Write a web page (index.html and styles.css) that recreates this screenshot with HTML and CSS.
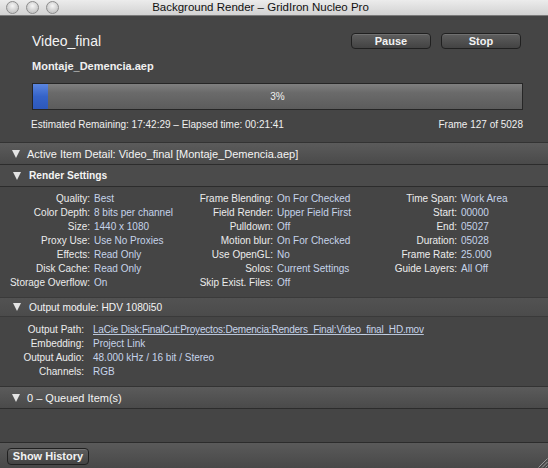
FILE: index.html
```html
<!DOCTYPE html>
<html>
<head>
<meta charset="utf-8">
<link rel="stylesheet" href="styles.css">
</head>
<body>
<div class="window">
  <div class="titlebar">
    <div class="lights"><span class="light"></span><span class="light"></span><span class="light"></span></div>
    <div class="title">Background Render – GridIron Nucleo Pro</div>
  </div>
  <div class="summary">
    <div class="row-top">
      <div class="name">Video_final</div>
      <div class="buttons"><button class="btn">Pause</button><button class="btn">Stop</button></div>
    </div>
    <div class="project">Montaje_Demencia.aep</div>
    <div class="progress"><div class="fill" style="width:3%"></div><span class="pct">3%</span></div>
    <div class="status"><span>Estimated Remaining: 17:42:29 – Elapsed time: 00:21:41</span><span>Frame 127 of 5028</span></div>
  </div>

  <div class="head head-main"><span class="tri"></span><span class="head-text">Active Item Detail: Video_final [Montaje_Demencia.aep]</span></div>
  <div class="head head-sub"><span class="tri"></span><span class="head-text sub-text">Render Settings</span></div>
  <div class="settings">
    <span class="lbl">Quality:</span><span class="val">Best</span>
    <span class="lbl">Frame Blending:</span><span class="val">On For Checked</span>
    <span class="lbl">Time Span:</span><span class="val">Work Area</span>

    <span class="lbl">Color Depth:</span><span class="val">8 bits per channel</span>
    <span class="lbl">Field Render:</span><span class="val">Upper Field First</span>
    <span class="lbl">Start:</span><span class="val">00000</span>

    <span class="lbl">Size:</span><span class="val">1440 x 1080</span>
    <span class="lbl">Pulldown:</span><span class="val">Off</span>
    <span class="lbl">End:</span><span class="val">05027</span>

    <span class="lbl">Proxy Use:</span><span class="val">Use No Proxies</span>
    <span class="lbl">Motion blur:</span><span class="val">On For Checked</span>
    <span class="lbl">Duration:</span><span class="val">05028</span>

    <span class="lbl">Effects:</span><span class="val">Read Only</span>
    <span class="lbl">Use OpenGL:</span><span class="val">No</span>
    <span class="lbl">Frame Rate:</span><span class="val">25.000</span>

    <span class="lbl">Disk Cache:</span><span class="val">Read Only</span>
    <span class="lbl">Solos:</span><span class="val">Current Settings</span>
    <span class="lbl">Guide Layers:</span><span class="val">All Off</span>

    <span class="lbl">Storage Overflow:</span><span class="val">On</span>
    <span class="lbl">Skip Exist. Files:</span><span class="val">Off</span>
    <span class="lbl"></span><span class="val"></span>
  </div>
  <div class="head head-out"><span class="tri"></span><span class="head-text sub-text">Output module: HDV 1080i50</span></div>
  <div class="output">
    <span class="lbl">Output Path:</span><span class="val link">LaCie Disk:FinalCut:Proyectos:Demencia:Renders_Final:Video_final_HD.mov</span>
    <span class="lbl">Embedding:</span><span class="val">Project Link</span>
    <span class="lbl">Output Audio:</span><span class="val">48.000 kHz / 16 bit / Stereo</span>
    <span class="lbl">Channels:</span><span class="val">RGB</span>
  </div>
  <div class="head head-main"><span class="tri"></span><span class="head-text">0 – Queued Item(s)</span></div>
  <div class="queue"></div>
  <div class="bottombar">
    <button class="btn btn-history">Show History</button>
    <svg class="grip" width="11" height="11" viewBox="0 0 11 11">
      <path d="M10.5 1.5 L1.5 10.5 M10.5 5 L5 10.5 M10.5 8.5 L8.5 10.5" stroke="#9a9a9a" stroke-width="1" fill="none"/>
    </svg>
  </div>
</div>
</body>
</html>
```

FILE: styles.css
```css
* { box-sizing: border-box; }
html, body { margin: 0; padding: 0; }
body {
  width: 548px;
  height: 468px;
  background: #454545;
  font-family: "Liberation Sans", Arial, sans-serif;
  color: #ececec;
  overflow: hidden;
}
.window {
  display: flex;
  flex-direction: column;
  height: 468px;
}
.titlebar {
  height: 16px;
  flex: none;
  display: flex;
  align-items: center;
  background: linear-gradient(#ececec, #d2d2d2);
  border-bottom: 1px solid #7a7a7a;
  position: relative;
}
.lights {
  display: flex;
  gap: 7px;
  padding-left: 6px;
  position: absolute;
  left: 0;
  top: 1px;
}
.light {
  width: 13px;
  height: 13px;
  border-radius: 50%;
  background: radial-gradient(circle at 50% 35%, #f6f6f6, #c8c8c8 70%);
  border: 1px solid #8c8c8c;
}
.title {
  flex: 1;
  text-align: center;
  font-size: 11.5px;
  color: #111;
  padding-right: 27px;
  line-height: 15px;
}
.summary {
  flex: none;
  height: 126px;
  padding: 0 25px 0 32px;
  display: flex;
  flex-direction: column;
}
.row-top {
  margin-top: 17px;
  height: 16px;
  display: flex;
  align-items: center;
  justify-content: space-between;
}
.name {
  font-size: 14px;
  color: #f4f4f4;
  margin-top: -1px;
}
.buttons {
  display: flex;
  gap: 10px;
  margin-right: 2px;
}
.btn {
  width: 80px;
  height: 16px;
  padding: 0;
  font-family: "Liberation Sans", Arial, sans-serif;
  font-size: 11px;
  font-weight: bold;
  color: #f2f2f2;
  background: linear-gradient(#5e5e5e, #434343);
  border: 1px solid #202020;
  border-radius: 4px;
  line-height: 14px;
  box-shadow: inset 0 1px 0 rgba(255,255,255,0.12);
}
.project {
  margin-top: 9px;
  height: 16px;
  line-height: 16px;
  font-size: 11px;
  font-weight: bold;
  color: #f0f0f0;
}
.progress {
  margin-top: 9px;
  height: 27px;
  border: 1px solid #262626;
  background: linear-gradient(#808080 0%, #6a6a6a 35%, #5c5c5c 100%);
  position: relative;
  display: flex;
  align-items: center;
  justify-content: center;
}
.fill {
  position: absolute;
  left: 0;
  top: 0;
  bottom: 0;
  background: linear-gradient(#5b86e0, #3563c8 50%, #2d58bb);
}
.pct {
  position: relative;
  font-size: 10px;
  color: #f0f0f0;
}
.status {
  margin-top: 8px;
  margin-left: -1px;
  height: 14px;
  line-height: 14px;
  font-size: 10px;
  color: #f0f0f0;
  display: flex;
  justify-content: space-between;
}
.head {
  flex: none;
  display: flex;
  align-items: center;
  border-bottom: 1px solid #2c2c2c;
}
.head-main {
  height: 23px;
  background: linear-gradient(#5b5b5b, #4a4a4a);
  border-top: 1px solid #333;
}
.head-sub {
  height: 22px;
  background: #4b4b4b;
}
.head-out {
  height: 20px;
  background: linear-gradient(#525252, #4b4b4b);
  border-top: 1px solid #3a3a3a;
  border-bottom: 1px solid #3a3a3a;
}
.tri {
  width: 0;
  height: 0;
  border-left: 4.5px solid transparent;
  border-right: 4.5px solid transparent;
  border-top: 8px solid #e4e4e4;
  margin-left: 12px;
  margin-right: 7px;
}
.head-sub .tri, .head-out .tri { margin-left: 13px; margin-right: 8px; }
.head-text {
  font-size: 11px;
  color: #f4f4f4;
}
.sub-text {
  font-size: 10.2px;
}
.head-sub .sub-text { font-weight: bold; }
.settings {
  flex: none;
  height: 110px;
  padding-top: 5px;
  display: grid;
  grid-template-columns: 90px 93px 90px 94px 90px 1fr;
  grid-auto-rows: 14px;
  font-size: 10px;
  line-height: 14px;
}
.lbl {
  text-align: right;
  color: #ececec;
  white-space: nowrap;
}
.val {
  padding-left: 4px;
  color: #c6d4ea;
  white-space: nowrap;
}
.output {
  flex: none;
  height: 69px;
  padding-top: 6px;
  display: grid;
  grid-template-columns: 84px 1fr;
  grid-auto-rows: 14px;
  font-size: 10px;
  line-height: 14px;
}
.output .val { padding-left: 9px; }
.link {
  text-decoration: underline;
  text-decoration-color: #b8c4d8;
  letter-spacing: -0.2px;
}
.queue {
  flex: 1;
}
.bottombar {
  flex: none;
  height: 26px;
  border-top: 1px solid #2c2c2c;
  background: linear-gradient(#5a5a5a, #484848);
  display: flex;
  align-items: center;
  padding-left: 7px;
  position: relative;
}
.btn-history {
  width: 82px;
  height: 17px;
  font-size: 11px;
  margin-top: 1px;
}
.grip {
  position: absolute;
  right: 0;
  bottom: 0;
}
```
